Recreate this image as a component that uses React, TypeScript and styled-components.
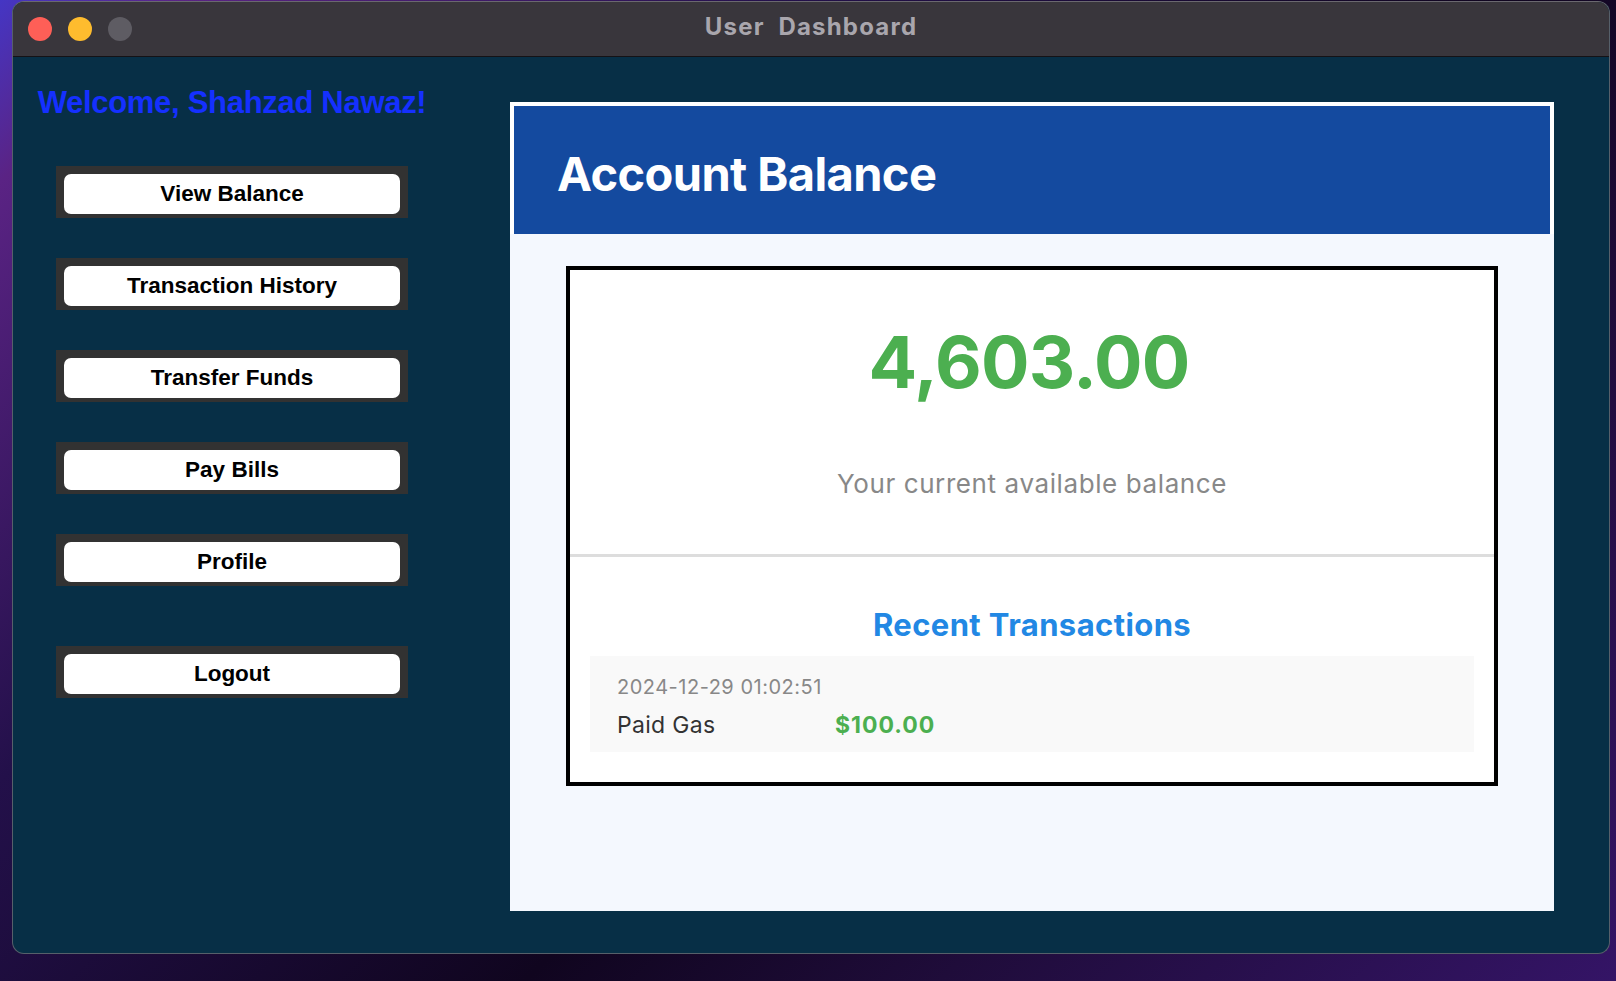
import React from 'react';
import styled, { createGlobalStyle } from 'styled-components';

const GlobalStyle = createGlobalStyle`
  html, body {
    margin: 0;
    padding: 0;
    height: 100%;
  }
  body {
    width: 1616px;
    height: 981px;
    overflow: hidden;
    background: linear-gradient(135deg, #4536c4 0%, #5a2384 7%, #23104a 30%, #10051f 58%, #1f0c3a 74%, #341466 100%);
    font-family: Inter, "Noto Sans", sans-serif;
  }
  #root {
    height: 100%;
  }
`;

// Desktop holds the mac-style window
const Desktop = styled.div`
  height: 100%;
  box-sizing: border-box;
  padding: 1px 6px 27px 12px;
  display: flex;
`;

const Window = styled.div`
  flex: 1;
  display: flex;
  flex-direction: column;
  border: 1px solid #56606a;
  border-top-color: #6a686f;
  border-radius: 12px;
  overflow: hidden;
  background: #072f46;
`;

const TitleBar = styled.div`
  height: 54px;
  flex: none;
  display: grid;
  grid-template-columns: 1fr auto 1fr;
  align-items: center;
  background: #39363c;
  border-bottom: 1px solid #141216;
`;

const Lights = styled.div`
  display: flex;
  gap: 16px;
  padding-left: 15px;
`;

const Light = styled.span<{ $color: string }>`
  width: 24px;
  height: 24px;
  border-radius: 50%;
  background: ${({ $color }) => $color};
`;

const WindowTitle = styled.div`
  font-family: Inter, sans-serif;
  font-weight: 700;
  font-size: 24px;
  letter-spacing: 1.2px;
  line-height: 1;
  color: #a9a6ad;
  white-space: pre;
  margin-top: -4px;
`;

const Content = styled.div`
  flex: 1;
  display: grid;
  grid-template-columns: 438px 1044px;
  column-gap: 59px;
`;

const Sidebar = styled.div`
  display: flex;
  flex-direction: column;
  align-items: center;
  padding-top: 30px;
`;

const Welcome = styled.h2`
  margin: 0;
  font-family: "Liberation Sans", Arial, sans-serif;
  font-weight: 700;
  font-size: 31px;
  letter-spacing: -0.3px;
  line-height: 1;
  color: #1530ff;
  white-space: nowrap;
`;

const Nav = styled.nav`
  display: flex;
  flex-direction: column;
  gap: 40px;
  margin-top: 48px;
`;

const NavSlot = styled.div<{ $spaced?: boolean }>`
  width: 352px;
  box-sizing: border-box;
  padding: 8px 8px 4px;
  background: #323232;
  margin-top: ${({ $spaced }) => ($spaced ? '20px' : '0')};
`;

const NavButton = styled.button`
  display: block;
  width: 100%;
  height: 40px;
  border: none;
  border-radius: 7px;
  background: #ffffff;
  color: #000;
  font-family: "Liberation Sans", Arial, sans-serif;
  font-weight: 700;
  font-size: 22.5px;
  padding: 0;
  cursor: pointer;
`;

const Panel = styled.main`
  margin: 45px 0 42px;
  background: #f4f8fe;
  display: flex;
  flex-direction: column;
`;

const PanelHeader = styled.header`
  height: 128px;
  box-sizing: content-box;
  border: 4px solid #ffffff;
  border-bottom: none;
  background: #144a9f;
  padding: 0 0 0 43px;
  display: flex;
  align-items: flex-start;
`;

const PanelTitle = styled.h1`
  margin: 44px 0 0;
  font-family: Inter, sans-serif;
  font-weight: 700;
  font-size: 47px;
  letter-spacing: -0.6px;
  line-height: 1;
  color: #ffffff;
`;

const Card = styled.section`
  margin: 32px 56px 0;
  border: 4px solid #000;
  background: #ffffff;
  display: flex;
  flex-direction: column;
`;

const BalanceBlock = styled.div`
  display: flex;
  flex-direction: column;
  align-items: center;
  padding: 56px 0 57px;
`;

const Amount = styled.div`
  font-family: Inter, sans-serif;
  font-weight: 700;
  font-size: 72px;
  letter-spacing: -0.8px;
  line-height: 1;
  color: #4caf50;
  margin-right: 6px;
`;

const Caption = styled.div`
  margin-top: 73px;
  font-family: Inter, sans-serif;
  font-size: 26px;
  letter-spacing: 0.6px;
  line-height: 1;
  color: #888888;
`;

const Divider = styled.hr`
  margin: 0;
  border: none;
  height: 3px;
  background: #dddddd;
`;

const Recent = styled.div`
  padding: 52px 20px 30px;
  display: flex;
  flex-direction: column;
`;

const RecentTitle = styled.h3`
  margin: 0 0 16px;
  text-align: center;
  font-family: Inter, sans-serif;
  font-weight: 700;
  font-size: 31px;
  letter-spacing: 0.4px;
  line-height: 1;
  color: #2288e4;
`;

const TxRow = styled.div`
  background: #f9f9f9;
  padding: 21px 27px 15px;
  display: flex;
  flex-direction: column;
  gap: 17px;
`;

const TxDate = styled.div`
  font-size: 20px;
  letter-spacing: 0.5px;
  line-height: 1;
  color: #888888;
`;

const TxLine = styled.div`
  display: grid;
  grid-template-columns: 218px auto;
  font-size: 23px;
  line-height: 1;
`;

const TxLabel = styled.span`
  color: #333333;
  letter-spacing: 0.3px;
`;

const TxAmount = styled.span`
  color: #4caf50;
  font-weight: 700;
  letter-spacing: 1px;
`;

const navItems = ['View Balance', 'Transaction History', 'Transfer Funds', 'Pay Bills', 'Profile'];

export default function App() {
  return (
    <>
      <GlobalStyle />
      <Desktop>
        <Window>
          <TitleBar>
            <Lights>
              <Light $color="#fe5f57" />
              <Light $color="#febc2e" />
              <Light $color="#5e5c63" />
            </Lights>
            <WindowTitle>{'User  Dashboard'}</WindowTitle>
            <div />
          </TitleBar>
          <Content>
            <Sidebar>
              <Welcome>Welcome, Shahzad Nawaz!</Welcome>
              <Nav>
                {navItems.map((item) => (
                  <NavSlot key={item}>
                    <NavButton>{item}</NavButton>
                  </NavSlot>
                ))}
                <NavSlot $spaced>
                  <NavButton>Logout</NavButton>
                </NavSlot>
              </Nav>
            </Sidebar>
            <Panel>
              <PanelHeader>
                <PanelTitle>Account Balance</PanelTitle>
              </PanelHeader>
              <Card>
                <BalanceBlock>
                  <Amount>4,603.00</Amount>
                  <Caption>Your current available balance</Caption>
                </BalanceBlock>
                <Divider />
                <Recent>
                  <RecentTitle>Recent Transactions</RecentTitle>
                  <TxRow>
                    <TxDate>2024-12-29 01:02:51</TxDate>
                    <TxLine>
                      <TxLabel>Paid Gas</TxLabel>
                      <TxAmount>$100.00</TxAmount>
                    </TxLine>
                  </TxRow>
                </Recent>
              </Card>
            </Panel>
          </Content>
        </Window>
      </Desktop>
    </>
  );
}
